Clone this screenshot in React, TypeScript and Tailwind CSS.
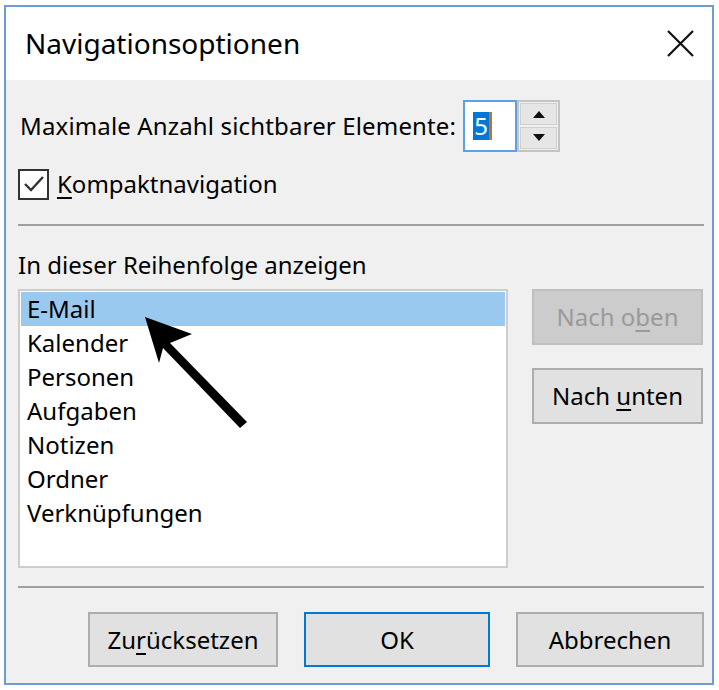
const items = [
  "E-Mail",
  "Kalender",
  "Personen",
  "Aufgaben",
  "Notizen",
  "Ordner",
  "Verknüpfungen",
];

const font = { fontFamily: '"Noto Sans", "Open Sans", sans-serif' };

function Btn({
  children,
  className = "",
}: {
  children: React.ReactNode;
  className?: string;
}) {
  return (
    <div
      className={
        "flex items-center justify-center border-2 border-[#adadad] bg-[#e1e1e1] text-[24px] text-black " +
        className
      }
    >
      {children}
    </div>
  );
}

export default function App() {
  return (
    <div
      className="w-[719px] h-[690px] bg-white pt-[5px] pl-[4px] overflow-hidden"
      style={font}
    >
      <div className="w-[710px] h-[680px] border-2 border-[#6c9bd6] flex flex-col">
        {/* title bar */}
        <div className="h-[73px] bg-white flex items-center justify-between pl-[19px] pr-[18px] shrink-0">
          <span className="text-[28px] text-black leading-none pb-[2px]">
            Navigationsoptionen
          </span>
          <svg width="27" height="27" viewBox="0 0 27 27">
            <path
              d="M1 1 L26 26 M26 1 L1 26"
              stroke="#111"
              strokeWidth="2.2"
              fill="none"
            />
          </svg>
        </div>

        {/* body */}
        <div className="flex-1 bg-[#f0f0f0] pl-[12px] pr-[8px] flex flex-col">
          <div className="mt-[20px] h-[52px] flex items-center gap-[7px]">
            <span className="text-[24px] text-black pl-[2px] tracking-[0.15px]">
              Maximale Anzahl sichtbarer Elemente:
            </span>
            <div className="flex h-[52px]">
              <div className="w-[54px] h-full border-2 border-[#5aa2e6] bg-white flex items-center pl-[8px]">
                <span className="bg-[#0078d7] text-white text-[24px] leading-[28px] h-[28px] px-[1px]">
                  5
                </span>
                <span className="w-[3px] h-[28px] bg-[#c8702a]" />
              </div>
              <div className="w-[43px] h-full border-2 border-[#c4c4c4] bg-[#f0f0f0] flex flex-col gap-[2px] p-[1px]">
                <div className="flex-1 bg-[#e6e6e6] border border-[#cfcfcf] flex items-center justify-center">
                  <svg width="12" height="8" viewBox="0 0 12 8">
                    <path d="M0 8 L6 1 L12 8 Z" fill="#111" />
                  </svg>
                </div>
                <div className="flex-1 bg-[#e6e6e6] border border-[#cfcfcf] flex items-center justify-center">
                  <svg width="12" height="8" viewBox="0 0 12 8">
                    <path d="M0 0 L6 7 L12 0 Z" fill="#111" />
                  </svg>
                </div>
              </div>
            </div>
          </div>

          <div className="mt-[14px] flex items-center gap-[8px]">
            <div className="w-[31px] h-[31px] border-2 border-[#333] bg-white flex items-center justify-center">
              <svg width="22" height="18" viewBox="0 0 22 18">
                <path
                  d="M2 9 L8 15 L20 2"
                  stroke="#333"
                  strokeWidth="2.4"
                  fill="none"
                />
              </svg>
            </div>
            <span className="text-[24px] text-black">
              <span className="underline underline-offset-4">K</span>
              ompaktnavigation
            </span>
          </div>

          <div className="mt-[22px] h-[2px] bg-[#a0a0a0]" />

          <div className="mt-[24px] text-[24px] text-black leading-[30px]">
            In dieser Reihenfolge anzeigen
          </div>

          <div className="mt-[9px] flex gap-[24px]">
            <div className="relative w-[490px] h-[279px] border-2 border-[#cdcdcd] bg-white pt-[1px] px-[1px]">
              {items.map((it, i) => (
                <div
                  key={it}
                  className={
                    "h-[34px] flex items-center pl-[6px] text-[24px] text-black " +
                    (i === 0 ? "bg-[#99c9ef]" : "")
                  }
                >
                  {it}
                </div>
              ))}
              <svg
                className="absolute left-0 top-0"
                width="490"
                height="279"
                viewBox="0 0 490 279"
              >
                <path
                  d="M125 26 L172 43 L150 52 L227 131 L220 137 L143 57 L139 72 Z"
                  fill="#000"
                />
              </svg>
            </div>
            <div className="flex flex-col gap-[23px]">
              <div className="w-[171px] h-[56px] flex items-center justify-center border-2 border-[#bfbfbf] bg-[#cccccc] text-[24px] text-[#9a9a9a]">
                Nach o<span className="underline underline-offset-4">b</span>en
              </div>
              <Btn className="w-[171px] h-[56px]">
                Nach&nbsp;<span className="underline underline-offset-4">u</span>nten
              </Btn>
            </div>
          </div>

          <div className="mt-[18px] h-[2px] bg-[#a0a0a0]" />

          <div className="mt-[24px] flex justify-end gap-[26px]">
            <Btn className="w-[190px] h-[55px]">
              Zu<span className="underline underline-offset-4">r</span>ücksetzen
            </Btn>
            <Btn className="w-[186px] h-[55px] !border-[#0078d7]">OK</Btn>
            <Btn className="w-[188px] h-[55px]">Abbrechen</Btn>
          </div>
        </div>
      </div>
    </div>
  );
}
